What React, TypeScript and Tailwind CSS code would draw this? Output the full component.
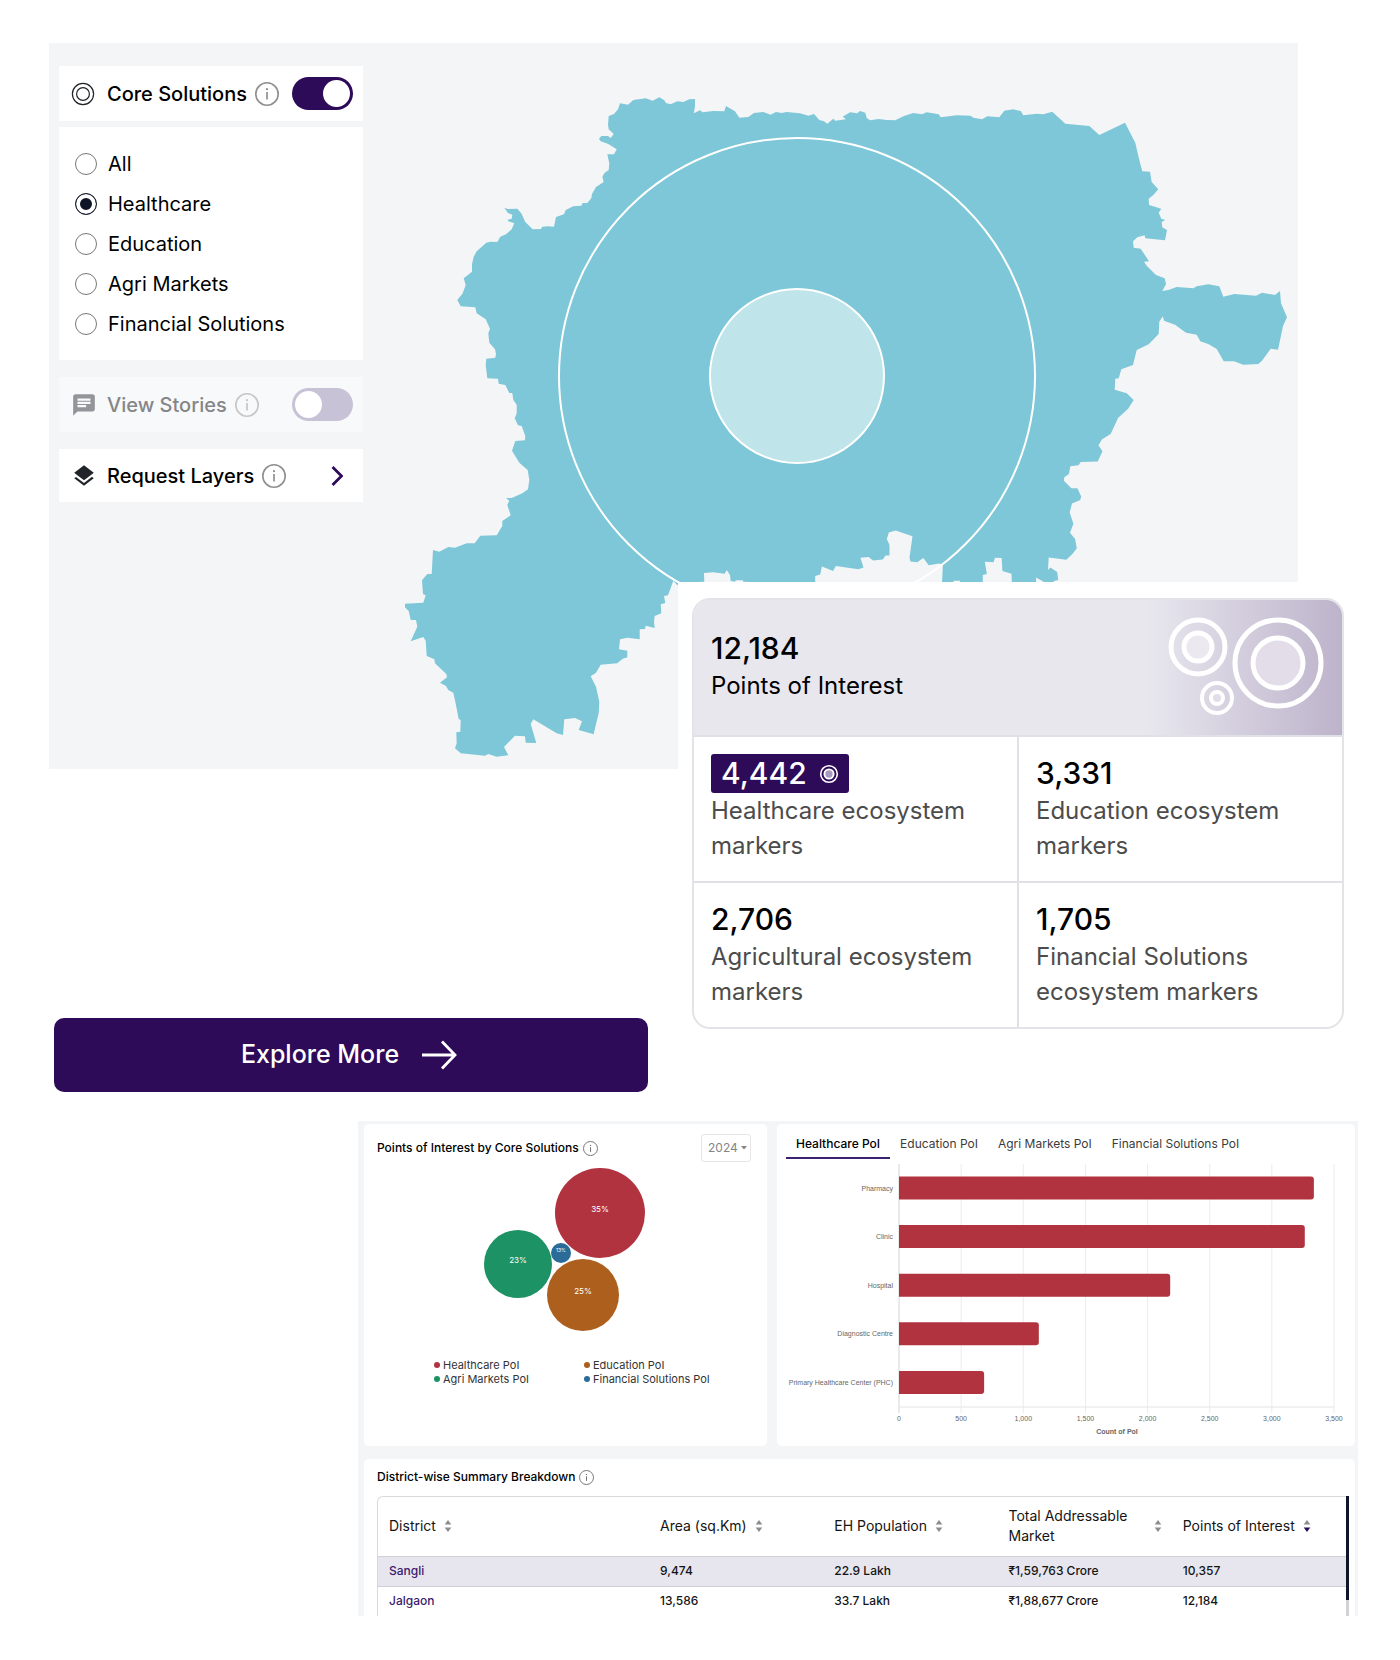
import React, { useState } from "react";
import { MdChat, MdLayers } from "react-icons/md";

/* ---------- District map ---------- */

const SHEETS: { x: number; y: number; k: number; pts: string }[] = [
  {
    x: 380, y: 60, k: 3,
    pts: "232,720 248,700 257,675 251,655 276,635 276,612 281,590 290,574 319,548 331,545 352,546 361,530 378,523 395,508 403,490 385,484 383,479 395,476 397,464 384,459 373,443 383,447 412,446 424,460 436,486 458,508 483,507 487,500 503,499 522,500 528,471 552,463 557,450 580,439 604,437 608,429 622,429 634,415 636,402 648,381 671,366 667,350 674,338 686,330 688,310 682,283 702,283 710,268 685,252 662,244 657,236 664,228 684,228 692,234 701,222 686,208 684,195 686,168 702,162 714,148 720,130 744,134 760,120 797,115 818,122 838,112 852,120 858,129 872,133 892,124 910,126 928,118 945,117 945,140 941,160 960,151 968,157 1000,153 1033,154 1038,138 1065,154 1078,173 1105,171 1122,159 1150,156 1172,164 1188,156 1205,159 1220,156",
  },
  {
    x: 800, y: 60, k: 3,
    pts: "0,160 25,167 42,162 58,180 72,184 82,191 100,176 106,182 138,178 128,170 150,157 172,160 180,153 196,158 200,174 210,181 236,177 260,180 286,181 312,168 340,159 366,163 380,157 416,163 422,172 470,166 512,167 520,173 546,178 562,169 598,172 613,152 640,148 662,153 670,166 710,161 730,163 757,155 796,191 868,198 898,225 975,188 1006,248 1018,300 1027,334 1050,335 1055,366 1075,388 1060,405 1046,416 1047,435 1084,446 1076,458 1084,476 1096,480 1085,486 1087,502 1101,510 1095,541 1036,535 1034,526 1012,532 999,544 1001,563 1022,566 1047,604 1032,605 1040,617 1068,645 1094,655 1098,673 1087,693 1105,690 1130,681 1180,685 1190,679 1225,673 1258,679 1270,710 1303,702 1368,707 1386,698 1425,705 1440,693 1443,730 1461,772 1449,798 1434,869 1412,866 1386,902 1375,912 1330,914 1302,904 1271,904 1250,867 1226,853 1201,844 1190,824 1158,818 1125,794 1092,782 1088,769 1078,785 1076,822 1046,853 1010,870 999,915 964,928 956,955 946,956 944,989 980,1000 1001,1020",
  },
  {
    x: 780, y: 380, k: 2.9585,
    pts: "1030,85 1000,112 990,135 978,160 953,175 942,193 954,211 940,241 890,243 883,252 859,255 855,278 841,288 840,298 862,320 880,320 891,345 888,355 864,365 857,392 868,425 858,452 873,470 878,498 865,515 847,532 795,525 793,562 800,555 820,568 823,592 810,595 808,606 785,606 785,600 758,584 757,606 686,606 685,573 658,565 656,527 636,526 632,539 606,538 612,574 600,577 600,606 530,606 533,594 515,594 505,606 479,606 482,546 470,543 440,548 424,527 406,539 386,537 383,525 392,462 342,445 322,451 316,470 324,488 324,519 312,519 304,531 275,534 262,524 238,526 247,555 232,560 165,550 157,565 124,552 119,575 104,580 104,606",
  },
  {
    x: 380, y: 400, k: 3,
    pts: "1090,545 1088,541 1068,541 1064,545 1052,543 1050,525 1040,510 1034,521 1000,517 972,519 973,545 900,548 892,556 880,542 864,586 852,588 856,609 842,613 844,640 824,648 822,665 824,684 797,677 795,687 779,688 779,718 742,713 720,718 717,748 742,752 742,772 728,776 712,790 662,794 648,818 632,829 648,860 658,905 656,940 645,985 641,1003 596,990 606,964 585,954 553,958 549,1005 530,1000 460,958 452,972 469,1029 437,1028 435,1009 405,1007 372,1041 385,1066 350,1070 325,1062 315,1067 242,1060 225,1045 230,1030 229,997 241,995 242,960 236,957 226,905 220,878 205,870 198,858 180,848 201,832 199,822 165,790 163,778 140,768 137,722 130,711 92,724 112,680 108,660 92,660 86,633 75,622 75,611 130,608 137,586 129,582 126,541 142,522 155,522 159,450 178,455 205,441 225,443 260,430 284,430 301,407 350,406 367,378 367,363 392,346 382,315 388,302 378,294 395,294 427,280 444,268 448,240 443,210 418,188 396,152 406,123 435,121 436,108 425,78 414,76 404,55 410,40 410,14 400,0",
  },
  {
    x: 380, y: 60, k: 3,
    pts: "397,999 388,999 376,975 356,971 354,956 322,955 317,915 319,896 346,893 348,882 345,868 328,848 325,820 330,806 317,778 290,760 286,742 242,739",
  },
];

const OUTLINE = SHEETS.flatMap((s) =>
  s.pts.split(" ").map((p) => {
    const [x, y] = p.split(",").map(Number);
    return `${(s.x + x / s.k).toFixed(1)},${(s.y + y / s.k).toFixed(1)}`;
  }),
).join(" ");

function DistrictMap() {
  return (
    <svg viewBox="49 43 1249 726" className="col-start-1 row-start-1 h-auto w-full" role="img" aria-label="District map">
      <polygon points={OUTLINE} fill="#7dc7d8" />
      <circle cx="797" cy="376" r="238" fill="none" stroke="#fff" strokeWidth="2" />
      <circle cx="797" cy="376" r="87" fill="#bfe4ea" stroke="#fff" strokeWidth="2" />
    </svg>
  );
}

/* ---------- Small icons ---------- */

function InfoIcon({ className }: { className: string }) {
  return (
    <svg viewBox="0 0 24 24" className={className} fill="none" stroke="currentColor" aria-hidden="true">
      <circle cx="12" cy="12" r="11.2" strokeWidth="1.6" />
      <path d="M12 10v7.5" strokeWidth="1.7" />
      <circle cx="12" cy="7.2" r="1.1" fill="currentColor" stroke="none" />
    </svg>
  );
}

function TargetIcon() {
  return (
    <svg viewBox="0 0 24 24" className="size-6 shrink-0" fill="none" stroke="#212529" strokeWidth="1.2" aria-hidden="true">
      <circle cx="12" cy="12" r="10.6" />
      <circle cx="12" cy="12" r="6.4" />
    </svg>
  );
}

function SortIcon({ active }: { active?: boolean }) {
  return (
    <svg viewBox="0 0 8 14" className="h-3.5 w-2 shrink-0" aria-hidden="true">
      <path d="M4 1 7.3 5.6H.7Z" fill="#8c8c90" />
      <path d="M4 13 .7 8.4h6.6Z" fill={active ? "#2d0b59" : "#8c8c90"} />
    </svg>
  );
}

/* ---------- Side panel ---------- */

const toggleClass =
  "relative h-[33px] w-[61px] shrink-0 appearance-none rounded-full bg-[#c8c2d7] before:absolute before:left-[3px] before:top-[3px] before:size-[27px] before:rounded-full before:bg-white checked:bg-[#2d0b59] checked:before:left-[31px]";

function SidePanel() {
  const [on, setOn] = useState(true);
  const [choice, setChoice] = useState("Healthcare");
  return (
    <aside className="col-start-1 row-start-1 ml-2.5 mt-[23px] w-[304px] text-[20px] leading-[30px] text-black">
      <div className="flex h-[55px] items-center bg-white pl-3 pr-2.5">
        <TargetIcon />
        <label htmlFor="core" className="ml-3 font-medium">Core Solutions</label>
        <InfoIcon className="ml-2 size-6 shrink-0 text-[#8f8f8f]" />
        <input id="core" type="checkbox" role="switch" checked={on} onChange={() => setOn(!on)} className={`${toggleClass} ml-auto`} />
      </div>
      <fieldset aria-label="Solution type" className="mt-1.5 flex flex-col gap-2.5 bg-white px-4 pb-[21px] pt-[22px]">
        {["All", "Healthcare", "Education", "Agri Markets", "Financial Solutions"].map((s) => (
          <label key={s} className="flex items-center gap-[11px]">
            <input
              type="radio"
              name="solution"
              checked={choice === s}
              onChange={() => setChoice(s)}
              className="size-[22px] appearance-none rounded-full border border-[#777] bg-white checked:border-[#1a2133] checked:bg-[#0d1526] checked:shadow-[inset_0_0_0_4px_#fff]"
            />
            {s}
          </label>
        ))}
      </fieldset>
      <div className="mt-[17px] flex h-[55px] items-center bg-[#f8f9fb] pl-3 pr-2.5 text-[#858688]">
        <MdChat className="size-[26px] shrink-0 text-[#929699]" />
        <label htmlFor="stories" className="ml-2.5 font-medium">View Stories</label>
        <InfoIcon className="ml-2 size-6 shrink-0 text-[#c4c6c8]" />
        <input id="stories" type="checkbox" role="switch" disabled className={`${toggleClass} ml-auto`} />
      </div>
      <button type="button" className="mt-[17px] flex h-[53px] w-full items-center bg-white pl-3 pr-5 font-medium">
        <MdLayers className="size-[26px] shrink-0 text-[#212529]" />
        <span className="ml-2.5">Request Layers</span>
        <InfoIcon className="ml-2 size-6 shrink-0 text-[#8f8f8f]" />
        <svg viewBox="0 0 12 22" className="ml-auto h-[22px] w-3" fill="none" stroke="#2d0b59" strokeWidth="2.8" aria-hidden="true">
          <path d="m1.5 2 9 9-9 9" />
        </svg>
      </button>
    </aside>
  );
}

/* ---------- Summary card ---------- */

function Stat({ value, label, highlight }: { value: string; label: string; highlight?: boolean }) {
  return (
    <div className="bg-white px-[17px] pb-[18px] pt-[17px]">
      {highlight ? (
        <span className="flex h-[39px] w-fit items-center gap-3 rounded-[3px] bg-[#2d0b59] px-2.5 text-[30px] font-medium text-white">
          {value}
          <svg viewBox="0 0 20 20" className="size-5" fill="none" stroke="#fff" aria-hidden="true">
            <circle cx="10" cy="10" r="8.3" strokeWidth="1.6" />
            <circle cx="10" cy="10" r="4.6" strokeWidth="1.9" fill="#a99bc0" />
          </svg>
        </span>
      ) : (
        <span className="flex h-[39px] items-center text-[30px] font-medium text-black">{value}</span>
      )}
      <p className="text-[24px] leading-[35px] text-[#4c4c4c]">{label}</p>
    </div>
  );
}

function SummaryCard() {
  return (
    <section className="relative flex-1 bg-white pb-[63px] pl-3.5 pr-14 pt-4">
      <div className="overflow-hidden rounded-[18px] border-2 border-[#e3e4e8]">
        <div className="flex h-[135px] items-start justify-between bg-linear-to-r from-[#e8e7ee] from-70% to-[#bdb3cb] pl-[17px] pr-[17px]">
          <div className="pt-7 text-black">
            <p className="text-[30px] font-medium leading-10">12,184</p>
            <p className="text-[24px] leading-[35px]">Points of Interest</p>
          </div>
          <svg viewBox="0 0 158 100" className="mt-4 h-[100px] w-[158px]" fill="none" stroke="#fff" strokeWidth="5" aria-hidden="true">
            <circle cx="31" cy="31" r="27" />
            <circle cx="31" cy="31" r="14" fill="#ebe8f0" />
            <circle cx="111" cy="47" r="43" />
            <circle cx="111" cy="47" r="25" fill="#e2dde9" />
            <circle cx="50" cy="82" r="15" strokeWidth="4" />
            <circle cx="50" cy="82" r="6" strokeWidth="4" fill="#e2dde9" />
          </svg>
        </div>
        <div className="grid grid-cols-2 gap-0.5 bg-[#e0e1e6] pt-0.5">
          <Stat value="4,442" label="Healthcare ecosystem markers" highlight />
          <Stat value="3,331" label="Education ecosystem markers" />
          <Stat value="2,706" label="Agricultural ecosystem markers" />
          <Stat value="1,705" label="Financial Solutions ecosystem markers" />
        </div>
      </div>
    </section>
  );
}

/* ---------- Dashboard ---------- */

const BUBBLES = [
  { x: 223, y: 51, r: 45, c: "#b1333f", t: "35%", s: 8 },
  { x: 141, y: 102, r: 34, c: "#1d9264", t: "23%", s: 8 },
  { x: 184, y: 91, r: 10, c: "#2a6b97", t: "13%", s: 5 },
  { x: 206, y: 133, r: 36, c: "#ad5f1d", t: "25%", s: 8 },
];

function BubbleCard() {
  const legend = [
    ["Healthcare PoI", "bg-[#b1333f]"],
    ["Education PoI", "bg-[#ad5f1d]"],
    ["Agri Markets PoI", "bg-[#1d9264]"],
    ["Financial Solutions PoI", "bg-[#2a6b97]"],
  ];
  return (
    <section className="rounded-[5px] bg-white pb-12 pl-[13px] pr-4 pt-2.5">
      <div className="flex items-center">
        <h2 className="text-[12px] font-medium leading-5 text-black">Points of Interest by Core Solutions</h2>
        <InfoIcon className="ml-1 size-[15px] text-[#777]" />
        <div className="relative ml-auto">
          <select aria-label="Year" className="h-7 w-[50px] appearance-none rounded-[3px] border border-[#e6e6e8] bg-white pl-1.5 text-[12px] text-[#858585]">
            <option>2024</option>
          </select>
          <svg viewBox="0 0 6 4" className="pointer-events-none absolute right-1 top-3 h-1 w-1.5" fill="#858585" aria-hidden="true">
            <path d="M0 0h6L3 3.5Z" />
          </svg>
        </div>
      </div>
      <svg viewBox="0 0 374 176" className="h-auto w-full" role="img" aria-label="Share of points of interest" fontFamily="Inter, sans-serif" textAnchor="middle" fill="#fff">
        {BUBBLES.map((b) => (
          <g key={b.t}>
            <circle cx={b.x} cy={b.y} r={b.r} fill={b.c} />
            <text x={b.x} y={b.y - 1} fontSize={b.s}>{b.t}</text>
          </g>
        ))}
      </svg>
      <ul className="ml-[57px] mt-5 grid grid-cols-[150px_auto] text-[11px] leading-[14px] text-[#333]">
        {legend.map(([name, color]) => (
          <li key={name} className="flex items-center gap-[3px]">
            <span className={`size-1.5 rounded-full ${color}`} />
            {name}
          </li>
        ))}
      </ul>
    </section>
  );
}

const BARS: [string, number][] = [
  ["Pharmacy", 3338],
  ["Clinic", 3265],
  ["Hospital", 2182],
  ["Diagnostic Centre", 1125],
  ["Primary Healthcare Center (PHC)", 685],
];

function BarCard() {
  const [tab, setTab] = useState(0);
  const sx = (v: number) => 122 + (v / 3500) * 435;
  return (
    <section className="rounded-[5px] bg-white pb-2.5 pt-[11px]">
      <div role="tablist" className="ml-[9px] flex text-[12px] leading-[17px] text-[#3c3c3c]">
        {["Healthcare PoI", "Education PoI", "Agri Markets PoI", "Financial Solutions PoI"].map((t, i) => (
          <button
            key={t}
            type="button"
            role="tab"
            aria-selected={tab === i}
            onClick={() => setTab(i)}
            className="border-b-2 border-transparent px-2.5 pb-[5px] aria-selected:border-[#3b2170] aria-selected:font-medium aria-selected:text-black"
          >
            {t}
          </button>
        ))}
      </div>
      <svg viewBox="0 0 578 277" className="h-auto w-full" role="img" aria-label="Count of PoI by type" fontFamily="Liberation Sans, Arial, sans-serif" fontSize="7" fill="#666">
        {[0, 500, 1000, 1500, 2000, 2500, 3000, 3500].map((v) => (
          <g key={v}>
            <path d={`M${sx(v)} 5v249`} stroke={v ? "#ececec" : "#d4d4d4"} />
            <text x={sx(v)} y="262" textAnchor="middle">{v.toLocaleString("en-US")}</text>
          </g>
        ))}
        <path d="M122 248h435" stroke="#e4e4e4" />
        {BARS.map(([name, v], i) => {
          const y = 17.500 + i * 48.6;
          const w = sx(v) - 122;
          return (
            <g key={name}>
              <path d={`M122 ${y}h${w - 3}q3 0 3 3v17q0 3 -3 3h${3 - w}z`} fill="#b1333f" />
              <text x="116" y={y + 14} textAnchor="end">{name}</text>
            </g>
          );
        })}
        <text x="340" y="275" textAnchor="middle" fontWeight="bold">Count of PoI</text>
      </svg>
    </section>
  );
}

const COLUMNS = ["District", "Area (sq.Km)", "EH Population", "Total Addressable Market", "Points of Interest"];
const ROWS = [
  ["Sangli", "9,474", "22.9 Lakh", "₹1,59,763 Crore", "10,357"],
  ["Jalgaon", "13,586", "33.7 Lakh", "₹1,88,677 Crore", "12,184"],
];

function BreakdownCard() {
  return (
    <section className="col-span-2 mt-[3px] rounded-t-[5px] bg-white pl-[13px] pr-1.5 pt-2">
      <div className="flex items-center">
        <h2 className="text-[12px] font-medium leading-5 text-black">District-wise Summary Breakdown</h2>
        <InfoIcon className="ml-1 size-[15px] text-[#777]" />
      </div>
      <div className="mt-[9px] flex">
        <div className="flex-1 overflow-hidden rounded-tl-[6px] border-l border-t border-[#d9d9dc]">
          <table className="w-full table-fixed text-left text-[12px] font-medium text-[#141414]">
            <colgroup>
              <col className="w-[28%]" />
              <col className="w-[18%]" />
              <col className="w-[18%]" />
              <col className="w-[18%]" />
              <col className="w-[18%]" />
            </colgroup>
            <thead>
              <tr className="h-[59px] text-[14px] leading-5">
                {COLUMNS.map((c, i) => (
                  <th key={c} scope="col" className="pl-[11px] font-normal">
                    <button type="button" className="flex items-center gap-2 text-left">
                      <span className={i === 3 ? "w-[137px]" : ""}>{c}</span>
                      <SortIcon active={i === 4} />
                    </button>
                  </th>
                ))}
              </tr>
            </thead>
            <tbody>
              {ROWS.map((r) => (
                <tr key={r[0]} className="h-[30px] odd:border-y odd:border-[#d0d0d4] odd:bg-[#e7e6ee]">
                  {r.map((c, i) => (
                    <td key={c} className="pl-[11px]">
                      {i === 0 ? <a href="#district" className="text-[#3b1a70]">{c}</a> : c}
                    </td>
                  ))}
                </tr>
              ))}
            </tbody>
          </table>
        </div>
        <div className="w-[3px] bg-[#d2d2d4]">
          <div className="h-[104px] bg-[#0d1526]" />
        </div>
      </div>
    </section>
  );
}

export default function App() {
  return (
    <main className="min-h-screen bg-white pb-[42px] pt-[43px] font-[Inter,sans-serif]">
      <section className="ml-[49px] mr-[102px] grid items-start bg-[#f4f5f7]">
        <DistrictMap />
        <SidePanel />
      </section>

      <div className="-mt-[187px] flex items-end gap-[30px] pl-[54px]">
        <a
          href="#explore"
          className="relative flex h-[74px] w-[46%] max-w-[594px] items-center justify-center gap-[22px] rounded-[10px] bg-[#2d0b59] pr-1 text-[25px] font-medium text-white"
        >
          Explore More
          <svg viewBox="0 0 36 32" className="h-8 w-9" fill="none" stroke="#fff" strokeWidth="2.8" aria-hidden="true">
            <path d="M1 16h33M21 2.500l13 13.500-13 13.500" />
          </svg>
        </a>
        <SummaryCard />
      </div>

      <section className="ml-[358px] mr-[42px] mt-[29px] grid grid-cols-[403fr_578fr] gap-2.5 bg-[#f4f5f7] pl-1.5 pr-[3px] pt-[3px]">
        <BubbleCard />
        <BarCard />
        <BreakdownCard />
      </section>
    </main>
  );
}
